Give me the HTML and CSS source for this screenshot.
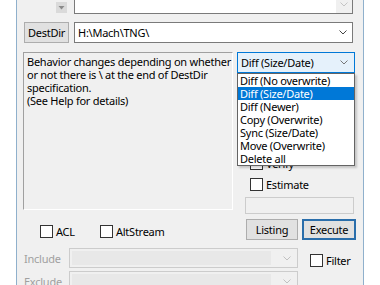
FILE: index.html
```html
<!DOCTYPE html>
<html>
<head>
<meta charset="utf-8">
<link rel="stylesheet" href="styles.css">
</head>
<body>
<div class="window">
  <div class="row-top">
    <span class="spin"><svg width="11" height="11" viewBox="0 0 11 11"><polygon points="2.5,4 8.5,4 5.5,7.5" fill="#8a8a8a"/></svg></span>
    <div class="textbox topbox">
      <span class="arrow-zone"><svg width="8" height="5" viewBox="0 0 8 5"><polyline points="0.5,0.5 4,4 7.5,0.5" fill="none" stroke="#c4c4c4" stroke-width="1"/></svg></span>
    </div>
  </div>
  <div class="row-dest">
    <div class="btn dest-btn">DestDir</div>
    <div class="textbox destbox">
      <span class="path">H:\Mach\TNG\</span>
      <svg class="chev" width="8" height="5" viewBox="0 0 8 5"><polyline points="0.5,0.5 4,4 7.5,0.5" fill="none" stroke="#444" stroke-width="1"/></svg>
    </div>
  </div>
  <div class="main">
    <div class="left">
      <div class="memo">Behavior changes depending on whether<br>or not there is \ at the end of DestDir<br>specification.<br>(See Help for details)</div>
      <div class="checks">
        <label class="check acl"><span class="box"></span>ACL</label>
        <label class="check"><span class="box"></span>AltStream</label>
      </div>
    </div>
    <div class="right">
      <div class="combo-sel">
        <span>Diff (Size/Date)</span>
        <svg class="chev" width="8" height="5" viewBox="0 0 8 5"><polyline points="0.5,0.5 4,4 7.5,0.5" fill="none" stroke="#777" stroke-width="1"/></svg>
        <ul class="droplist">
          <li>Diff (No overwrite)</li>
          <li class="sel">Diff (Size/Date)</li>
          <li>Diff (Newer)</li>
          <li>Copy (Overwrite)</li>
          <li>Sync (Size/Date)</li>
          <li>Move (Overwrite)</li>
          <li>Delete all</li>
        </ul>
      </div>
      <label class="check verify"><span class="box"></span>Verify</label>
      <label class="check estimate"><span class="box"></span>Estimate</label>
      <div class="progress"></div>
      <div class="buttons">
        <div class="btn listing">Listing</div>
        <div class="btn execute">Execute</div>
      </div>
    </div>
  </div>
  <div class="filters">
    <span class="flabel">Include</span>
    <div class="dcombo"><span class="dfield"></span><svg class="chev" width="8" height="5" viewBox="0 0 8 5"><polyline points="0.5,0.5 4,4 7.5,0.5" fill="none" stroke="#c0c0c0" stroke-width="1"/></svg></div>
    <label class="check filter"><span class="box"></span>Filter</label>
    <span class="flabel">Exclude</span>
    <div class="dcombo"><span class="dfield"></span><svg class="chev" width="8" height="5" viewBox="0 0 8 5"><polyline points="0.5,0.5 4,4 7.5,0.5" fill="none" stroke="#c0c0c0" stroke-width="1"/></svg></div>
  </div>
</div>
</body>
</html>
```
FILE: styles.css
```css
* { box-sizing: border-box; }
html, body { margin: 0; padding: 0; }
body {
  background: #ffffff;
  width: 380px;
  height: 285px;
  overflow: hidden;
  font-family: "Segoe UI", "Noto Sans", sans-serif;
  font-size: 11px;
  letter-spacing: -0.25px;
  color: #000;
}
.window {
  margin-left: 16px;
  width: 348px;
  height: 285px;
  border-left: 1px solid #8fb0cc;
  border-right: 1px solid #8fb0cc;
  background: #f0f0f0;
  overflow: hidden;
}
.row-top {
  display: flex;
  align-items: flex-end;
  height: 14px;
  padding-left: 39px;
}
.spin {
  width: 11px;
  height: 11px;
  margin-bottom: 1px;
  background: #dadada;
  border: 0;
  display: block;
}
.spin svg { display: block; }
.textbox {
  background: #fff;
  border: 1px solid #7a7a7a;
}
.topbox {
  margin-left: 7px;
  width: 279px;
  height: 20px;
  flex: none;
  display: flex;
  justify-content: flex-end;
  align-items: stretch;
}
.arrow-zone {
  width: 16px;
  background: #f0f0f0;
  display: flex;
  align-items: center;
  justify-content: center;
  margin: 0 0 0 0;
}
.row-dest {
  display: flex;
  margin-top: 8px;
  height: 21px;
  padding-left: 7px;
}
.btn {
  background: #e1e1e1;
  border: 1px solid #adadad;
  display: flex;
  align-items: center;
  justify-content: center;
  height: 21px;
}
.dest-btn { width: 45px; }
.destbox {
  margin-left: 5px;
  width: 279px;
  height: 21px;
  display: flex;
  align-items: center;
  padding-left: 3px;
  padding-right: 5px;
}
.destbox .path { flex: 1; }
.chev { display: block; flex: none; }
.main {
  display: flex;
  margin-top: 9px;
  padding-left: 6px;
}
.left { width: 210px; }
.memo {
  height: 158px;
  border-top: 1px solid #a0a0a0;
  border-left: 1px solid #a0a0a0;
  border-right: 1px solid #ffffff;
  border-bottom: 1px solid #ffffff;
  padding: 2px 0 0 3px;
  line-height: 13px;
}
.checks {
  display: flex;
  margin-top: 15px;
  height: 13px;
  padding-left: 17px;
}
.check {
  display: flex;
  align-items: center;
  height: 13px;
  line-height: 13px;
}
.box {
  width: 13px;
  height: 13px;
  border: 1px solid #333;
  background: #fff;
  margin-right: 3px;
  flex: none;
}
.acl { width: 60px; }
.right {
  margin-left: 4px;
  width: 119px;
}
.combo-sel {
  position: relative;
  height: 21px;
  width: 118px;
  background: #e5f1fb;
  border: 1px solid #0078d7;
  display: flex;
  align-items: center;
  justify-content: space-between;
  padding: 0 6px 0 3px;
}
.droplist {
  position: absolute;
  top: 20px;
  left: -1px;
  width: 118px;
  margin: 0;
  padding: 0;
  list-style: none;
  background: #fff;
  border: 1px solid #646464;
  box-shadow: 2px 2px 2px rgba(0,0,0,0.18);
  z-index: 2;
}
.droplist li {
  height: 13px;
  line-height: 13px;
  padding-left: 2px;
  white-space: nowrap;
}
.droplist li.sel {
  background: #0078d7;
  color: #fff;
}
.verify {
  margin-top: 84px;
  padding-left: 13px;
}
.estimate {
  margin-top: 8px;
  padding-left: 13px;
}
.progress {
  margin-top: 6px;
  margin-left: 8px;
  width: 109px;
  height: 17px;
  border: 1px solid #cccccc;
  background: #f0f0f0;
}
.buttons {
  display: flex;
  margin-top: 5px;
  padding-left: 9px;
  gap: 4px;
}
.listing { width: 52px; }
.execute {
  width: 54px;
  border: 2px solid #2a6eab;
}
.filters {
  display: grid;
  grid-template-columns: 45px 229px auto;
  grid-template-rows: 20px 20px;
  row-gap: 3px;
  padding-left: 7px;
  margin-top: 8px;
}
.flabel {
  color: #a0a0a0;
  display: flex;
  align-items: center;
}
.dcombo {
  border: 1px solid #cccccc;
  background: #f0f0f0;
  display: flex;
  align-items: center;
  padding: 2px 6px 2px 2px;
}
.dfield {
  flex: 1;
  height: 100%;
  background: #e8e8e8;
  margin-right: 12px;
}
.filter {
  grid-column: 3;
  grid-row: 1 / span 2;
  align-self: start;
  margin-top: 6px;
  margin-left: 12px;
}
```
